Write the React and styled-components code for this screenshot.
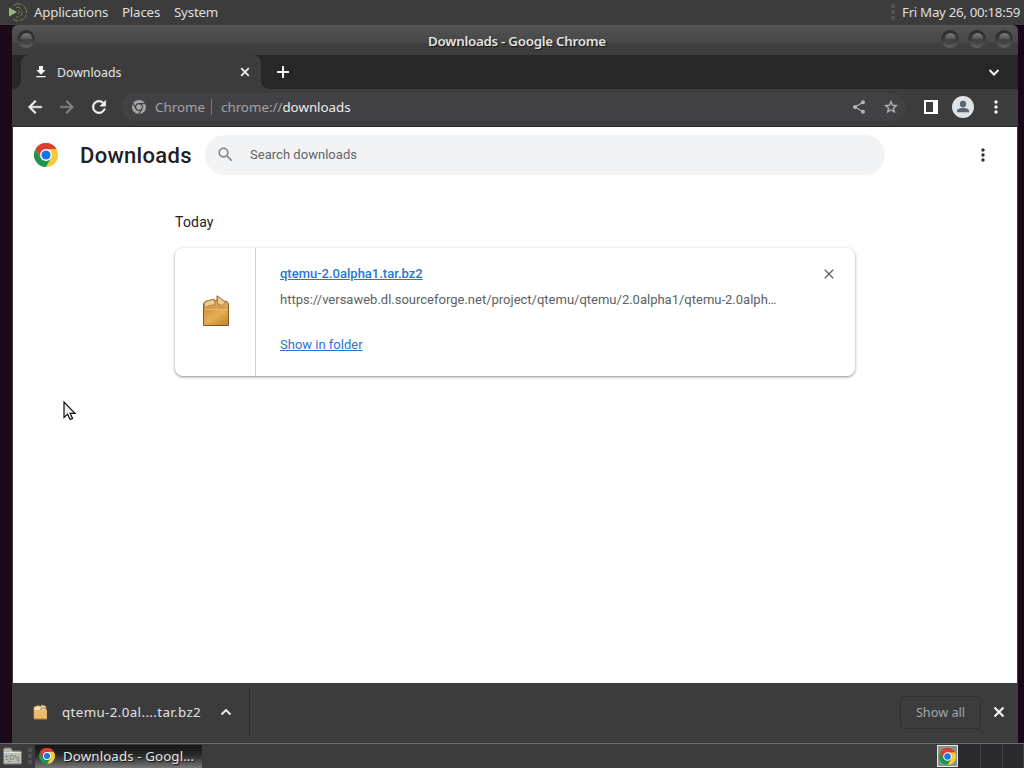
import React from 'react';
import styled, { createGlobalStyle } from 'styled-components';

const GlobalStyle = createGlobalStyle`
  * {
    box-sizing: border-box;
  }

  body {
    margin: 0;
    overflow: hidden;
    font-family: 'Noto Sans', sans-serif;
    font-size: 13.33px;
  }

  svg {
    display: block;
    flex: none;
  }
`;

const Desktop = styled.div`
  display: flex;
  flex-direction: column;
  width: 1024px;
  height: 768px;
  background: linear-gradient(90deg, #180716 0, #1c0a1c 12px, #1b0719 1017px, #180719 100%);
`;

const Panel = styled.header`
  display: flex;
  align-items: center;
  height: 25px;
  padding: 0 4px 1px 7px;
  background: #3c3c3c;
  color: #dfdfdf;
`;

const PanelMenu = styled.nav`
  display: flex;
  gap: 14px;
  margin-left: 6px;
  flex: 1;
`;

const PanelItem = styled.span`
  width: ${(props) => props.$width}px;
  letter-spacing: -0.2px;
  white-space: nowrap;
`;

const Grip = styled.i`
  width: 4px;
  height: 16px;
  margin: ${(props) => props.$margin || 0};
  background: repeating-linear-gradient(#525252 0 4px, #3c3c3c 4px 6px);
`;

const Clock = styled.time`
  letter-spacing: ${(props) => props.$spacing}px;
  white-space: nowrap;
`;

const Window = styled.main`
  display: flex;
  flex-direction: column;
  height: 718px;
  margin: 0 6px 0 12px;
  border-radius: 6px 6px 0 0;
  background: #3c3c3d;
  overflow: hidden;
`;

const TitleBar = styled.div`
  display: flex;
  align-items: center;
  height: 30px;
  padding: 0 5px;
  background: linear-gradient(#585858 0, #515151 3px, #484848 17px, #3f3f3f 18px, #3d3d3e 100%);
`;

const WindowTitle = styled.h1`
  flex: 1;
  margin: 0 0 0 58px;
  padding-top: 2px;
  font-size: 13.33px;
  font-weight: 600;
  letter-spacing: -0.25px;
  line-height: 18px;
  text-align: center;
  color: #e2e2e2;
  text-shadow: 1px 1px 1px #1c1c1c;
`;

const WindowButtons = styled.div`
  display: flex;
  gap: 9px;
`;

const WindowButton = styled.span`
  display: flex;
  align-items: center;
  justify-content: center;
  width: 18px;
  height: 18px;
  margin-top: -3px;
  border-radius: 50%;
  background: linear-gradient(#2b2b2b, #3a3a3a 55%, #626262);

  &::after {
    content: '';
    width: 11px;
    height: 11px;
    border-radius: 50%;
    background: linear-gradient(#7b7b7b, #545454 55%, #404040 60%, #454545);
  }
`;

const TabStrip = styled.div`
  display: flex;
  align-items: center;
  height: 34px;
  padding: 0 16px 0 1px;
  background: #272728;
`;

const Tab = styled.div`
  position: relative;
  display: flex;
  align-items: center;
  width: 240px;
  height: 34px;
  margin-left: 8px;
  padding: 0 8px 0 12px;
  border-radius: 8px 8px 0 0;
  background: #3c3c3d;
  color: #e6e6e6;
  font-size: 12.3px;

  &::before,
  &::after {
    content: '';
    position: absolute;
    bottom: 0;
    width: 8px;
    height: 8px;
  }

  &::before {
    left: -8px;
    background: radial-gradient(circle at 0 0, #272728 7.5px, #3c3c3d 8px);
  }

  &::after {
    right: -8px;
    background: radial-gradient(circle at 100% 0, #272728 7.5px, #3c3c3d 8px);
  }
`;

const TabTitle = styled.span`
  flex: 1;
  margin-left: 8px;
`;

const Spacer = styled.span`
  flex: 1;
`;

const NewTab = styled.span`
  margin-left: 12px;
`;

const Toolbar = styled.div`
  display: flex;
  align-items: center;
  height: 38px;
  padding: 0 9px 2px 13px;
  border-bottom: 1px solid #2a2a2a;
  background: #3c3c3d;
`;

const NavButtons = styled.div`
  display: flex;
  gap: 12px;
`;

const Omnibox = styled.div`
  display: flex;
  align-items: center;
  width: 784px;
  height: 28px;
  margin-left: 12px;
  padding: 0 6px 0 11px;
  border-radius: 14px;
  background: #424245;
  color: #a2a2a4;
  font-size: 13.33px;
`;

const Origin = styled.span`
  width: 56px;
  margin-left: 9px;
  white-space: nowrap;
`;

const Url = styled.span`
  flex: 1;
  padding-left: 9px;
  border-left: 1px solid #77777a;
  line-height: 16px;
  letter-spacing: ${(props) => props.$spacing}px;

  b {
    color: #ededed;
    font-weight: 400;
  }
`;

const OmniboxActions = styled.div`
  display: flex;
  gap: 16px;
`;

const Actions = styled.div`
  display: flex;
  align-items: center;
  gap: 14px;
  margin-left: 19px;
`;

const MenuButton = styled.span`
  margin-left: -2px;
`;

const Page = styled.section`
  flex: 1;
  margin: 0 1px;
  background: #fff;
  color: #202124;
  font-family: Roboto, sans-serif;
`;

const PageHeader = styled.div`
  display: flex;
  align-items: center;
  height: 56px;
  padding: 0 24px 0 21px;
`;

const PageTitle = styled.h2`
  width: 125px;
  margin: 0 0 0 22px;
  font-size: 22px;
  font-weight: 500;
  letter-spacing: ${(props) => props.$spacing}px;
  white-space: nowrap;
`;

const SearchField = styled.div`
  display: flex;
  align-items: center;
  width: 680px;
  height: 40px;
  padding: 0 11px 1px;
  border-radius: 20px;
  background: #f1f3f4;
  color: #626569;
  font-size: 13px;
`;

const SearchText = styled.span`
  margin-left: 15px;
  letter-spacing: ${(props) => props.$spacing}px;
`;

const DownloadList = styled.div`
  width: 680px;
  margin: 30px 0 0 162px;
`;

const DateHeading = styled.h3`
  margin: 0;
  font-size: 14px;
  font-weight: 400;
  letter-spacing: 0.2px;
  line-height: 18px;
`;

const Card = styled.article`
  display: flex;
  height: 128px;
  margin-top: 17px;
  border-radius: 8px;
  background: #fff;
  box-shadow: 0 1px 2px rgba(60, 64, 67, 0.4), 0 1px 3px 1px rgba(60, 64, 67, 0.16);
`;

const FileIcon = styled.div`
  display: flex;
  align-items: center;
  justify-content: center;
  width: 81px;
  padding: 0 0 2px 1px;
  border-right: 1px solid #d2d2d4;
`;

const Details = styled.div`
  display: flex;
  flex: 1;
  flex-direction: column;
  align-items: flex-start;
  padding: 17px 0 0 24px;
  font-size: 13px;
  line-height: 18px;
`;

const FileLink = styled.a`
  color: #2a76cc;
  font-weight: ${(props) => (props.$strong ? 500 : 400)};
  text-decoration: underline;
`;

const SourceUrl = styled.span`
  margin: 8px 0 27px;
  color: #606164;
  letter-spacing: ${(props) => props.$spacing}px;
  white-space: nowrap;
`;

const RemoveButton = styled.span`
  margin: 18px 18px 0 0;
`;

const Shelf = styled.footer`
  display: flex;
  align-items: center;
  height: 60px;
  padding: 0 11px 2px 21px;
  background: #3c3c3d;
  color: #e2e2e2;
`;

const ShelfItem = styled.div`
  display: flex;
  align-items: center;
  width: 217px;
  height: 48px;
  border-right: 1px solid #2d2d2e;
`;

const ShelfName = styled.span`
  width: 156px;
  margin-left: 14px;
  letter-spacing: ${(props) => props.$spacing}px;
  white-space: nowrap;
`;

const ShowAll = styled.span`
  display: flex;
  align-items: center;
  justify-content: center;
  width: 81px;
  height: 33px;
  margin-right: 10px;
  border: 1px solid #2f2f30;
  border-radius: 4px;
  color: #a6a6a8;
  font-size: 12.7px;
`;

const Taskbar = styled.footer`
  display: flex;
  align-items: center;
  height: 25px;
  padding-left: 3px;
  border-top: 1px solid #6a6a6a;
  background: #3c3c3c;
`;

const Task = styled.div`
  display: flex;
  align-items: center;
  width: 167px;
  height: 23px;
  margin-left: 3px;
  padding-left: 4px;
  background: linear-gradient(#141414, #2a2a2a 45%, #777);
  color: #e6e6e6;
  text-shadow: 1px 1px 1px #111;

  span {
    margin-left: 8px;
    letter-spacing: 0.1px;
    white-space: nowrap;
  }
`;

const TrayIcon = styled.div`
  display: flex;
  align-items: center;
  justify-content: center;
  width: 21px;
  height: 22px;
  border: 1px solid #e6e8e6;
  background: #87948a;
`;

const Workspace = styled.div`
  width: ${(props) => props.$width}px;
  height: 24px;
  border-right: 1px solid #424244;
  background: #2a292b;
`;

const Pointer = styled.svg`
  position: absolute;
  left: 63px;
  top: 401px;
`;

const ICONS = {
  download: 'M5 20h14v-2H5v2zM19 9h-4V3H9v6H5l7 7 7-7z',
  back: 'M20 11H7.83l5.59-5.59L12 4l-8 8 8 8 1.41-1.41L7.83 13H20v-2z',
  forward: 'M12 4l-1.41 1.41L16.17 11H4v2h12.17l-5.58 5.59L12 20l8-8z',
  reload:
    'M17.65 6.35C16.2 4.9 14.21 4 12 4c-4.42 0-7.99 3.58-7.99 8s3.57 8 7.99 8c3.73 0 6.84-2.55 7.73-6h-2.08c-.82 2.33-3.04 4-5.65 4-3.31 0-6-2.69-6-6s2.69-6 6-6c1.66 0 3.14.69 4.22 1.78L13 11h7V4l-2.35 2.35z',
  share:
    'M18 16.08c-.76 0-1.44.3-1.96.77L8.91 12.7c.05-.23.09-.46.09-.7s-.04-.47-.09-.7l7.05-4.11c.54.5 1.25.81 2.04.81 1.66 0 3-1.34 3-3s-1.34-3-3-3-3 1.34-3 3c0 .24.04.47.09.7L8.04 9.81C7.5 9.31 6.79 9 6 9c-1.66 0-3 1.34-3 3s1.34 3 3 3c.79 0 1.5-.31 2.04-.81l7.12 4.16c-.05.21-.08.43-.08.65 0 1.61 1.31 2.92 2.92 2.92s2.92-1.31 2.92-2.92-1.31-2.92-2.92-2.92z',
  star:
    'M22 9.24l-7.19-.62L12 2 9.19 8.63 2 9.24l5.46 4.73L5.82 21 12 17.27 18.18 21l-1.63-7.03L22 9.24zM12 15.4l-3.76 2.27 1-4.28-3.32-2.88 4.38-.38L12 6.1l1.71 4.04 4.38.38-3.32 2.88 1 4.28L12 15.4z',
  dots: 'M12 8c1.1 0 2-.9 2-2s-.9-2-2-2-2 .9-2 2 .9 2 2 2zm0 2c-1.1 0-2 .9-2 2s.9 2 2 2 2-.9 2-2-.9-2-2-2zm0 6c-1.1 0-2 .9-2 2s.9 2 2 2 2-.9 2-2-.9-2-2-2z',
  search:
    'M15.5 14h-.79l-.28-.27C15.41 12.59 16 11.11 16 9.5 16 5.91 13.09 3 9.5 3S3 5.91 3 9.5 5.91 16 9.5 16c1.61 0 3.09-.59 4.23-1.57l.27.28v.79l5 4.99L20.49 19l-4.99-5zm-6 0C7.01 14 5 11.99 5 9.5S7.01 5 9.5 5 14 7.01 14 9.5 11.99 14 9.5 14z',
  close:
    'M19 6.41L17.59 5 12 10.59 6.41 5 5 6.41 10.59 12 5 17.59 6.41 19 12 13.41 17.59 19 19 17.59 13.41 12z',
};

const Icon = ({ name, size = 20, color = '#f2f2f2', weight = 0 }) => (
  <svg width={size} height={size} viewBox="0 0 24 24" fill={color} stroke={color} strokeWidth={weight}>
    <path d={ICONS[name]} />
  </svg>
);

const Stroke = ({ d, size, width = 2, color = '#f0f0f0' }) => (
  <svg width={size} height={size} viewBox={`0 0 ${size} ${size}`} fill="none" stroke={color} strokeWidth={width}>
    <path d={d} />
  </svg>
);

const ChromeLogo = ({ size }) => (
  <svg width={size} height={size} viewBox="0 0 48 48">
    <path d="M24 24L3.2 12A24 24 0 0 1 44.8 12Z" fill="#da3f32" />
    <path d="M44.8 12A24 24 0 0 1 24 48L34.4 30 24 12Z" fill="#fcc934" />
    <path d="M24 48A24 24 0 0 1 3.2 12L13.6 30 24 36 34.4 30Z" fill="#20954b" />
    <path d="M3.2 12A24 24 0 0 1 44.8 12H24L13.6 30Z" fill="#da3f32" />
    <circle cx="24" cy="24" r="12" fill="#fff" />
    <circle cx="24" cy="24" r="9.2" fill="#1a73e8" />
  </svg>
);

const ChromeGlyph = () => (
  <svg width="14" height="14" viewBox="0 0 48 48" fill="#a7a7a9">
    <circle cx="24" cy="24" r="24" />
    <g fill="none" stroke="#424245" strokeWidth="4">
      <circle cx="24" cy="24" r="11.5" />
      <path d="M24 12.5H46M14 30L3 11M34 30L23 49" />
    </g>
  </svg>
);

const MateLogo = () => (
  <svg width="21" height="20" viewBox="0 0 21 20" fill="none" stroke="#6f8155">
    <path d="M2 5.5L10 10l-8 4.5z" fill="#9db874" stroke="none" />
    <path d="M6 3.5A8.5 8.5 0 1 1 6 17" strokeDasharray="9 1.5" />
    <path d="M9 5.3a5 5 0 1 1 0 9.7" strokeDasharray="6 1.5" />
    <path d="M11 8a2.2 2.2 0 0 1 0 4" />
  </svg>
);

const PackageIcon = () => (
  <svg width="28" height="32" viewBox="0 0 28 32">
    <defs>
      <linearGradient id="box" x1="0" y1="0" x2="1" y2="1">
        <stop offset="0" stopColor="#d2913a" />
        <stop offset="0.45" stopColor="#e5ad57" />
        <stop offset="1" stopColor="#c57f26" />
      </linearGradient>
    </defs>
    <path d="M1.5 15V9L3 6.5l9-2.3L13 6l2-.5V.8L22 6l3 .5 1.5 2.5v6z" fill="#dda354" stroke="#8d6429" strokeLinejoin="round" />
    <path d="M3 6.8l9-2.5 1.2 5.2-7 1.3-4 2.2zM15.5 1.2L23 7l-2.5 3.6-5-2z" fill="#f0cd96" stroke="#a17434" strokeWidth="0.7" />
    <path d="M4.5 13l8.7-2.4L15 12.5l.5-3 5.5 2 4 2.5z" fill="#d79a46" />
    <rect x="1.5" y="14" width="25" height="16.5" fill="url(#box)" />
    <path d="M1.5 12v18.5h25V12" fill="none" stroke="#80551e" />
    <path d="M2.5 14.8h23" stroke="#edbf74" strokeWidth="0.8" />
  </svg>
);

const SmallPackageIcon = () => (
  <svg width="15" height="16" viewBox="0 0 15 16">
    <path d="M1 7V3l5-1.5 1 1.3L9 1l4 1.6V7z" fill="#f6dfb6" stroke="#d69a4d" strokeWidth="0.7" />
    <path d="M8 2.5l2 2 3-.5M8 6V4" fill="none" stroke="#8a7048" />
    <path d="M.8 6H14v9.2H.8z" fill="#ebbb6c" />
    <path d="M1 14.7h13" stroke="#cf913f" />
  </svg>
);

const FolderIcon = () => (
  <svg width="19" height="18" viewBox="0 0 19 18">
    <path d="M.5 16V2.5Q.5 1 2 1h6l1.5 3H17q1.5 0 1.5 1.5V16q0 1-1 1h-16q-1 0-1-1z" fill="#b7bcb2" stroke="#747a72" />
    <path d="M1 5.5h17" stroke="#e2e3df" />
    <path
      d="M7.5 8.5h3v4h-3zM2.5 9.5h3M3.5 8v3M2.5 12.5h3M12.5 8v2.5h3M13 13h3M15.5 10v5M5 14.5h3"
      fill="none"
      stroke="#7d847b"
      strokeWidth="0.8"
    />
  </svg>
);

const App = () => {
  return (
    <>
      <GlobalStyle />
      <Desktop>
        <Panel>
          <MateLogo />
          <PanelMenu>
            <PanelItem $width={74}>Applications</PanelItem>
            <PanelItem $width={38}>Places</PanelItem>
            <PanelItem $width={43}>System</PanelItem>
          </PanelMenu>
          <Grip $margin="0 7px 0 0" />
          <Clock $spacing={-0.32}>Fri May 26, 00:18:59</Clock>
        </Panel>

        <Window>
          <TitleBar>
            <WindowButton />
            <WindowTitle>Downloads - Google Chrome</WindowTitle>
            <WindowButtons>
              <WindowButton />
              <WindowButton />
              <WindowButton />
            </WindowButtons>
          </TitleBar>

          <TabStrip>
            <Tab>
              <Icon name="download" size={16} />
              <TabTitle>Downloads</TabTitle>
              <Stroke size={16} d="M4.2 4.2l7.6 7.6M11.8 4.2l-7.6 7.6" width={1.8} />
            </Tab>
            <NewTab>
              <Stroke size={20} d="M10 4v12M4 10h12" />
            </NewTab>
            <Spacer />
            <Stroke size={16} d="M3.5 6L8 10.5 12.5 6" />
          </TabStrip>

          <Toolbar>
            <NavButtons>
              <Icon name="back" weight={0.6} />
              <Icon name="forward" color="#858587" weight={0.4} />
              <Icon name="reload" weight={0.6} />
            </NavButtons>
            <Omnibox>
              <ChromeGlyph />
              <Origin>Chrome</Origin>
              <Url $spacing={0}>
                chrome://<b>downloads</b>
              </Url>
              <OmniboxActions>
                <Icon name="share" size={16} color="#b5b5b8" />
                <Icon name="star" size={16} color="#b5b5b8" weight={0.4} />
              </OmniboxActions>
            </Omnibox>
            <Actions>
              <svg width="14" height="14" viewBox="0 0 14 14">
                <path d="M0 0h14v14H0zM2 2v10h7V2z" fill="#fff" fillRule="evenodd" />
              </svg>
              <svg width="22" height="22" viewBox="0 0 22 22">
                <circle cx="11" cy="11" r="11" fill="#dee3e7" />
                <circle cx="11" cy="8" r="3.2" fill="#59666f" />
                <path d="M5 16.2v-1.4c0-2 4-3 6-3s6 1 6 3v1.4z" fill="#59666f" />
              </svg>
              <MenuButton>
                <Icon name="dots" />
              </MenuButton>
            </Actions>
          </Toolbar>

          <Page>
            <PageHeader>
              <ChromeLogo size={24} />
              <PageTitle $spacing={0.3}>Downloads</PageTitle>
              <SearchField>
                <Icon name="search" size={19} color="#85888b" />
                <SearchText $spacing={0.03}>Search downloads</SearchText>
              </SearchField>
              <Spacer />
              <Icon name="dots" color="#303134" />
            </PageHeader>
            <DownloadList>
              <DateHeading>Today</DateHeading>
              <Card>
                <FileIcon>
                  <PackageIcon />
                </FileIcon>
                <Details>
                  <FileLink $strong>qtemu-2.0alpha1.tar.bz2</FileLink>
                  <SourceUrl $spacing={0}>
                    https://versaweb.dl.sourceforge.net/project/qtemu/qtemu/2.0alpha1/qtemu-2.0alph…
                  </SourceUrl>
                  <FileLink>Show in folder</FileLink>
                </Details>
                <RemoveButton>
                  <Icon name="close" size={16} color="#5f6368" />
                </RemoveButton>
              </Card>
            </DownloadList>
          </Page>

          <Shelf>
            <ShelfItem>
              <SmallPackageIcon />
              <ShelfName $spacing={0.38}>qtemu-2.0al....tar.bz2</ShelfName>
              <Stroke size={16} d="M3.5 10.5L8 6l4.5 4.5" width={1.9} />
            </ShelfItem>
            <Spacer />
            <ShowAll>Show all</ShowAll>
            <Stroke size={16} d="M3.5 3.5l9 9M12.5 3.5l-9 9" width={2.2} />
          </Shelf>
        </Window>

        <Taskbar>
          <FolderIcon />
          <Grip $margin="0 0 0 6px" />
          <Task>
            <ChromeLogo size={16} />
            <span>Downloads - Googl...</span>
          </Task>
          <Spacer />
          <TrayIcon>
            <ChromeLogo size={17} />
          </TrayIcon>
          <Workspace $width={23} />
          <Workspace $width={22} />
          <Workspace $width={21} />
        </Taskbar>
      </Desktop>
      <Pointer width="14" height="20" viewBox="0 0 14 20">
        <path d="M1 1v15.5l3.6-3.2 2.5 5.2 2.5-1.1-2.4-5H12z" fill="#eee" stroke="#111" strokeWidth="1.2" />
      </Pointer>
    </>
  );
};

export default App;
